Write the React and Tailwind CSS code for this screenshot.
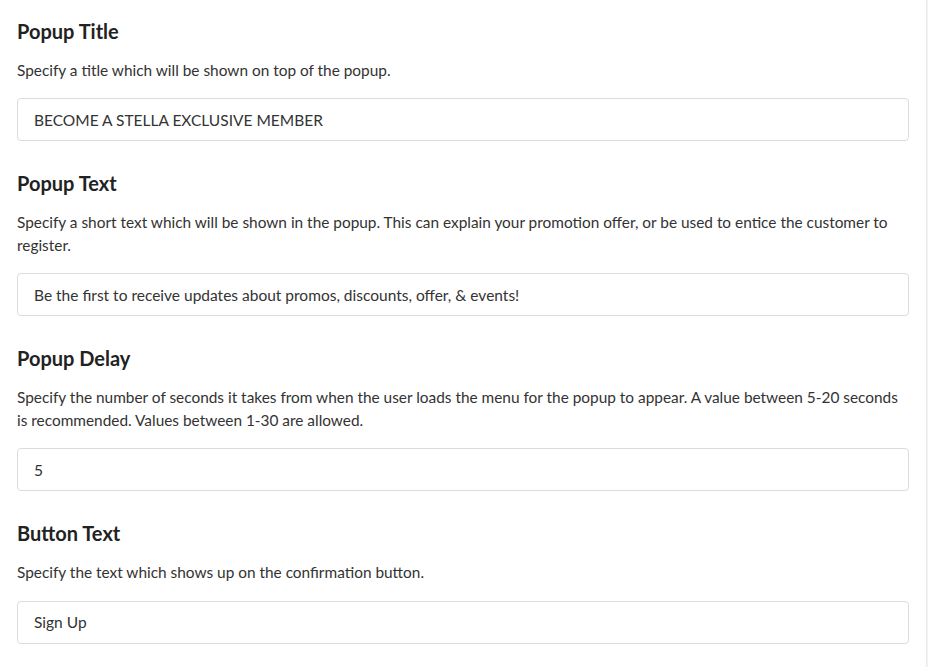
import { useState } from "react"

const fields = [
    {
        id: "title",
        label: "Popup Title",
        help: "Specify a title which will be shown on top of the popup.",
        value: "BECOME A STELLA EXCLUSIVE MEMBER",
    },
    {
        id: "text",
        label: "Popup Text",
        help: "Specify a short text which will be shown in the popup. This can explain your promotion offer, or be used to entice the customer to register.",
        value: "Be the first to receive updates about promos, discounts, offer, & events!",
    },
    {
        id: "delay",
        label: "Popup Delay",
        help: "Specify the number of seconds it takes from when the user loads the menu for the popup to appear. A value between 5-20 seconds is recommended. Values between 1-30 are allowed.",
        value: "5",
    },
    {
        id: "button",
        label: "Button Text",
        help: "Specify the text which shows up on the confirmation button.",
        value: "Sign Up",
    },
]

function Field({ field, value, onChange }) {
    return (
        <div className="flex flex-col">
            <h3 className="text-[20px] leading-[30px] font-bold text-[#222]">{field.label}</h3>
            <p className="mt-[13px] text-[15.4px] leading-[22.5px] text-[#333]">{field.help}</p>
            <input
                className="mt-[17px] h-[43px] w-full rounded-[4px] border border-[#dcdcdc] bg-white px-4 text-[15.5px] text-[#333] outline-none"
                name={field.id} value={value} autoComplete="off"
                onChange={(e) => onChange(field.id, e.target.value)}
            />
        </div>
    )
}

function App() {
    const [values, setValues] = useState(
        Object.fromEntries(fields.map(f => [f.id, f.value]))
    )

    const update = (id, v) => setValues(prev => ({ ...prev, [id]: v }))

    return (
        <div className="min-h-screen bg-[#f4f4f4] font-['Lato','Liberation_Sans',sans-serif]">
            <div className="w-[927px] min-h-screen border-r border-[#e9e9e9] bg-white px-[17px] pt-[15.5px] pb-8">
                <div className="flex flex-col gap-[27px]">
                    {fields.map(f => (
                        <Field key={f.id} field={f} value={values[f.id]} onChange={update} />
                    ))}
                </div>
            </div>
        </div>
    )
}

export default App
